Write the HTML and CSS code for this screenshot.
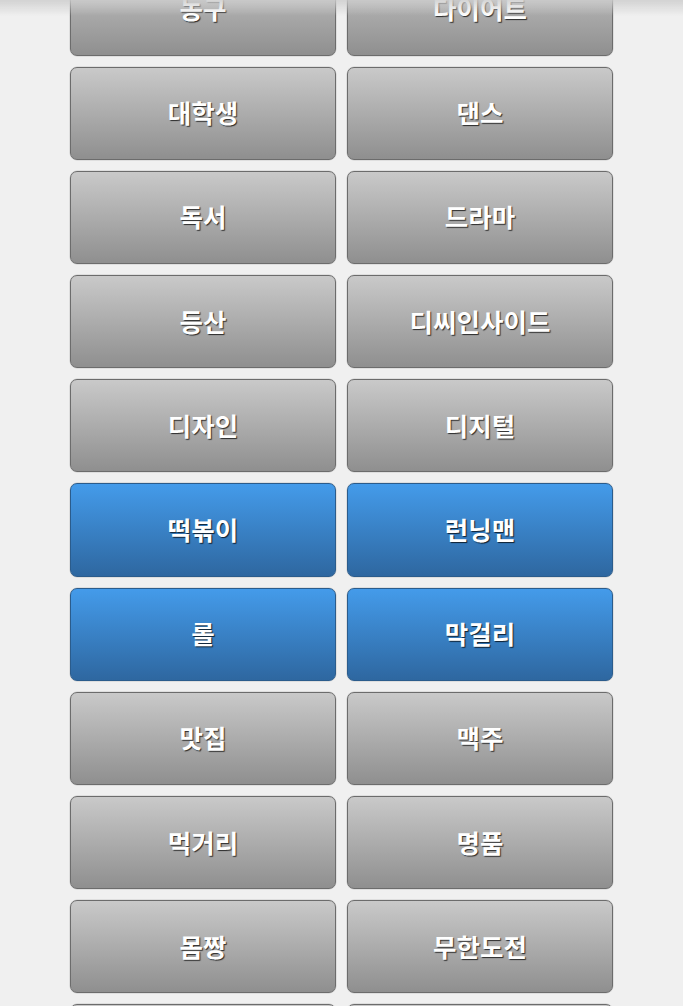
FILE: index.html
```html
<!DOCTYPE html>
<html>
<head>
  <meta name="viewport" content="width=device-width" />
  <link rel="stylesheet" href="styles.css">
  <title>관심사</title>
</head>
<body>
  <div class="topShade"></div>
  <div class="tagList">
    <div class="tag">농구</div>
    <div class="tag">다이어트</div>
    <div class="tag">대학생</div>
    <div class="tag">댄스</div>
    <div class="tag">독서</div>
    <div class="tag">드라마</div>
    <div class="tag">등산</div>
    <div class="tag">디씨인사이드</div>
    <div class="tag">디자인</div>
    <div class="tag">디지털</div>
    <div class="tag selected">떡볶이</div>
    <div class="tag selected">런닝맨</div>
    <div class="tag selected">롤</div>
    <div class="tag selected">막걸리</div>
    <div class="tag">맛집</div>
    <div class="tag">맥주</div>
    <div class="tag">먹거리</div>
    <div class="tag">명품</div>
    <div class="tag">몸짱</div>
    <div class="tag">무한도전</div>
    <div class="tag">뮤지컬</div>
    <div class="tag">미드</div>
  </div>
</body>
</html>
```

FILE: styles.css
```css
html, body {
  margin: 0;
  background-color: #f0f0f0;
  overflow: hidden;
}
.topShade {
  position: fixed;
  top: 0;
  left: 0;
  right: 0;
  height: 16px;
  background: linear-gradient(rgba(205,205,205,0.85), rgba(205,205,205,0));
  z-index: 2;
}
.tagList {
  display: grid;
  grid-template-columns: 266px 266px;
  column-gap: 11px;
  row-gap: 11px;
  width: 543px;
  margin: -37.5px auto 0 auto;
}
.tag {
  box-sizing: border-box;
  height: 93.2px;
  padding-bottom: 3px;
  display: flex;
  align-items: center;
  justify-content: center;
  border: solid 1px #6c6c6c;
  border-radius: 7px;
  background: linear-gradient(#c9c9c9, #8f8f8f);
  box-shadow: 0 0 0 0.5px rgba(0,0,0,0.15);
  color: white;
  font-family: "Noto Sans CJK KR", "Noto Sans", sans-serif;
  font-size: 25.5px;
  font-weight: bold;
  text-shadow: 1px 1px 1px rgba(0,0,0,0.75);
}
.tag.selected {
  border-color: #2b5c8c;
  background: linear-gradient(#449bea, #2e67a0);
}
```
